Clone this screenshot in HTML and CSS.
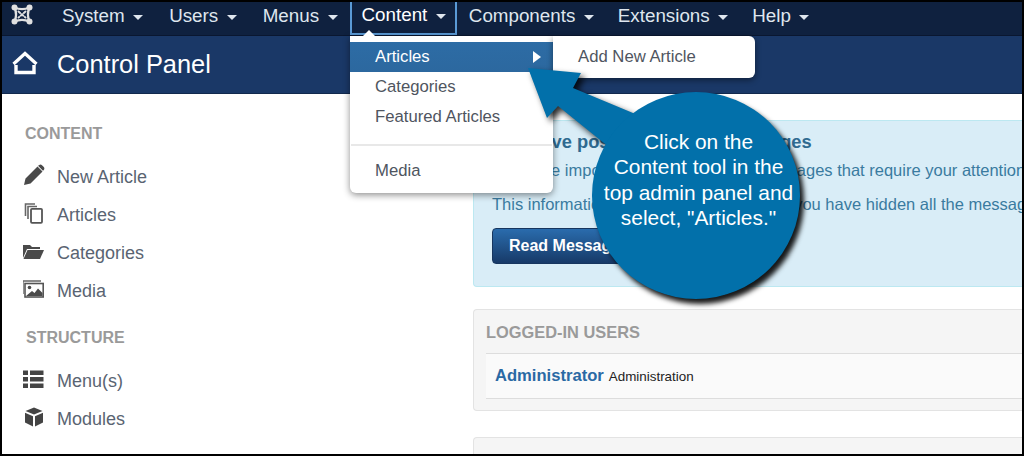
FILE: index.html
```html
<!DOCTYPE html>
<html lang="en">
<head>
<meta charset="utf-8">
<title>Control Panel</title>
<link rel="stylesheet" href="styles.css">
</head>
<body>
<div class="frame">
  <nav class="topnav">
    <div class="logo">
      <svg viewBox="0 0 22 21" width="22" height="21"><g fill="none" stroke="#e0e0e0" stroke-linecap="round"><path d="M3.5 3.5 C8 5.5 14 5.5 18.5 3.5 C16.5 8 16.5 13 18.5 17.5 C14 15.5 8 15.5 3.5 17.5 C5.5 13 5.5 8 3.5 3.5 Z" stroke-width="2.4"/><path d="M7.5 7.5 L14.5 13.5 M14.5 7.5 L7.5 13.5" stroke-width="2" stroke-dasharray="2.2 2"/></g><g fill="#e0e0e0"><circle cx="3.5" cy="3.5" r="3"/><circle cx="18.5" cy="3.5" r="3"/><circle cx="3.5" cy="17.5" r="3"/><circle cx="18.5" cy="17.5" r="3"/></g></svg>
    </div>
    <a class="navitem">System<i class="caret"></i></a>
    <a class="navitem">Users<i class="caret"></i></a>
    <a class="navitem">Menus<i class="caret"></i></a>
    <a class="navitem active">Content<i class="caret"></i></a>
    <a class="navitem">Components<i class="caret"></i></a>
    <a class="navitem">Extensions<i class="caret"></i></a>
    <a class="navitem">Help<i class="caret"></i></a>
  </nav>
  <header class="titlebar">
    <svg class="home" viewBox="0 0 26 24" width="26" height="24"><path d="M1.5 13 L13 2.5 L24.5 13" fill="none" stroke="#fff" stroke-width="3.2"/><path d="M4 14 V21.5 H22 V14" fill="none" stroke="#fff" stroke-width="3.4"/></svg>
    <h1>Control Panel</h1>
  </header>
  <div class="body">
    <aside class="sidebar">
      <h2 class="sidehead">CONTENT</h2>
      <ul class="sidelist">
        <li><svg viewBox="0 0 22 22" width="22" height="22"><path d="M1 21 L2.5 14.5 L14.5 2.5 L19.5 7.5 L7.5 19.5 Z M16 1.2 C17 .4 18 .4 19 1.2 L20.8 3 C21.6 4 21.6 5 20.8 6 L20 6.8 L15 1.8 Z" fill="#4a4a4a"/></svg>New Article</li>
        <li><svg viewBox="0 0 22 22" width="22" height="22"><path d="M2.5 14 V2 H12 M5 17 V4.5 H14" fill="none" stroke="#666" stroke-width="1.6"/><rect x="8" y="6.8" width="11" height="14" rx="1" fill="#fff" stroke="#555" stroke-width="1.8"/></svg>Articles</li>
        <li><svg viewBox="1 0 22 22" width="22" height="22"><path d="M1 5 H8 L10 7 H18 V9 H5 L1 18 Z" fill="#4a4a4a"/><path d="M5.5 10 H22 L18 19 H1.5 Z" fill="#4a4a4a"/></svg>Categories</li>
        <li><svg viewBox="1 0 22 22" width="22" height="22"><path d="M1 16 V3 H19" fill="none" stroke="#666" stroke-width="1.4"/><rect x="3" y="5.5" width="18.2" height="13.5" fill="#fff" stroke="#555" stroke-width="1.6"/><circle cx="7.5" cy="9.5" r="1.8" fill="#4a4a4a"/><path d="M4 18 L10 13 L12.5 15 L16 10.5 L20.5 15 V18 Z" fill="#4a4a4a"/></svg>Media</li>
      </ul>
      <h2 class="sidehead second">STRUCTURE</h2>
      <ul class="sidelist">
        <li><svg viewBox="1 0 22 22" width="22" height="22"><path d="M1 2.5 H6 V7 H1 Z M8 2.5 H21.5 V7 H8 Z M1 9 H6 V13.5 H1 Z M8 9 H21.5 V13.5 H8 Z M1 15.5 H6 V20 H1 Z M8 15.5 H21.5 V20 H8 Z" fill="#444"/></svg>Menu(s)</li>
        <li><svg viewBox="0 0 22 22" width="22" height="22"><path d="M11 1.5 L19.5 5 L11 8.5 L2.5 5 Z" fill="#444"/><path d="M2 6.8 L10 10.2 V20.5 L2 16.5 Z M20 6.8 L12 10.2 V20.5 L20 16.5 Z" fill="#444"/></svg>Modules</li>
      </ul>
    </aside>
    <main class="main">
      <section class="alert">
        <h3>You have post-installation messages</h3>
        <p>You have important post-installation messages that require your attention.</p>
        <p>This information area won't appear when you have hidden all the messages.</p>
        <button class="btn">Read Messages</button>
      </section>
      <section class="well">
        <h4>LOGGED-IN USERS</h4>
        <div class="userrow"><a class="username">Administrator</a> <small>Administration</small></div>
      </section>
      <section class="well last">
        <h4>POPULAR ARTICLES</h4>
      </section>
    </main>
  </div>

  <div class="menu">
    <i class="menutip"></i>
    <div class="menuitem current">Articles<i class="arrowright"></i></div>
    <div class="menuitem">Categories</div>
    <div class="menuitem">Featured Articles</div>
    <hr class="divider">
    <div class="menuitem">Media</div>
  </div>
  <div class="submenu">Add New Article</div>

  <svg class="pointer" viewBox="0 0 200 120" width="200" height="120"><path d="M8 8 L61 13 L53 28 L125 58 L95 92 L38 46 L27 58 Z" fill="#0270aa"/></svg>
  <div class="bubble">Click on the<br>Content tool in the<br>top admin panel and<br>select, "Articles."</div>
</div>
</body>
</html>
```
FILE: styles.css
```css
* { box-sizing: border-box; }
html, body { margin: 0; padding: 0; background: #000; }
body { width: 1024px; height: 456px; overflow: hidden; font-family: "Liberation Sans", Arial, sans-serif; }

.frame {
  position: relative;
  width: 1024px;
  height: 456px;
  border: 2px solid #000;
  overflow: hidden;
  background: #fff;
  display: flex;
  flex-direction: column;
}

.topnav {
  height: 34px;
  flex: none;
  display: flex;
  background: #0f213f;
  border-bottom: 1px solid #0a1730;
  color: #dfe6ee;
  font-size: 18.8px;
}
.logo { width: 47px; flex: none; padding: 0 0 0 9px; display: flex; align-items: center; height: 24px; }
.navitem { display: flex; align-items: center; height: 29px; padding: 0 13px; line-height: 1; }
.navitem.active {
  height: 33px;
  margin-left: -1px;
  color: #fff;
  border: 2px solid #5a9ad6;
  border-top: 0;
  padding: 0 9px 4px 10px;
}
.active ~ .navitem { padding: 0 12px; }
.caret {
  display: inline-block;
  margin-left: 8.5px;
  margin-top: 2px;
  border-top: 5px solid #dfe6ee;
  border-left: 5px solid transparent;
  border-right: 5px solid transparent;
}

.titlebar {
  height: 58px;
  flex: none;
  display: flex;
  align-items: center;
  gap: 19px;
  padding: 0 0 0 10px;
  background: #1a3867;
  border-bottom: 1px solid #12294d;
}
.home { flex: none; margin-top: -4px; }
.titlebar h1 { margin: 0; font-size: 25.4px; font-weight: 400; color: #fff; }

.body { flex: 1; display: flex; min-height: 0; overflow: hidden; }

.sidebar { width: 471px; flex: none; padding: 30px 0 0 21px; color: #5a6472; }
.sidehead { margin: 0 0 14px 2px; font-size: 16px; line-height: 20px; font-weight: 700; color: #9a9a9a; }
.sidehead.second { margin-top: 18px; margin-left: 3px; margin-bottom: 14px; }
.sidelist { list-style: none; margin: 0; padding: 0; }
.sidelist li { height: 38px; display: flex; align-items: center; gap: 12px; font-size: 18px; }
.sidelist svg { flex: none; margin-top: -4px; }

.main { flex: 1; min-width: 0; padding-top: 26px; }
.alert {
  height: 167px;
  margin-bottom: 22px;
  padding: 11px 18px 0;
  background: #d9edf7;
  border: 1px solid #bce8f1;
  border-right: 0;
  border-radius: 4px 0 0 4px;
  color: #3a7ba0;
  white-space: nowrap;
  overflow: hidden;
}
.alert h3 { margin: 0 0 8px; font-size: 18.3px; line-height: 20px; font-weight: 700; color: #2f6a90; }
.alert p { margin: 0 0 13px; font-size: 16.5px; line-height: 21px; }
.btn {
  display: block;
  margin-top: 13px;
  width: 150px;
  height: 36px;
  padding: 0 0 0 16px;
  text-align: left;
  font: 700 16px "Liberation Sans", Arial, sans-serif;
  color: #fff;
  background: linear-gradient(#2a6cad, #173a68);
  border: 1px solid #17365f;
  border-radius: 4px;
}

.well {
  height: 102px;
  margin-bottom: 26px;
  padding: 12px 0 0 12px;
  background: #f5f5f5;
  border: 1px solid #e3e3e3;
  border-right: 0;
  border-radius: 4px 0 0 4px;
}
.well.last { height: 60px; margin: 0; padding-top: 15px; }
.well h4 { margin: 0 0 11px; font-size: 16.4px; line-height: 20px; font-weight: 700; color: #9a9a9a; }
.userrow {
  height: 46px;
  display: flex;
  align-items: center;
  gap: 5px;
  padding-left: 9px;
  background: #fafafa;
  border-top: 1px solid #ddd;
  border-bottom: 1px solid #ddd;
}
.username { font-size: 16.6px; font-weight: 700; color: #2a69a4; }
.userrow small { font-size: 13.4px; color: #222; }

/* Dropdown menus lie over the page */
.menu {
  position: absolute;
  left: 348px;
  top: 34px;
  width: 203px;
  height: 157px;
  padding-top: 6px;
  background: #fff;
  border-radius: 0 0 6px 6px;
  box-shadow: 0 2px 7px rgba(0, 0, 0, .45);
  color: #4f5560;
  font-size: 16.7px;
}
.menutip {
  position: absolute;
  left: 13px;
  top: -6px;
  border-bottom: 6px solid #fff;
  border-left: 6px solid transparent;
  border-right: 6px solid transparent;
}
.menuitem { height: 30px; padding-left: 25px; display: flex; align-items: center; }
.menuitem.current { color: #fff; background: linear-gradient(#2d6ca5, #2c689f); justify-content: space-between; padding-right: 12px; }
.arrowright { border-left: 8px solid #fff; border-top: 6px solid transparent; border-bottom: 6px solid transparent; }
.divider { margin: 12px 1px 10px; height: 2px; border: 0; background: #e8e8e8; }

.submenu {
  position: absolute;
  left: 551px;
  top: 34px;
  width: 202px;
  height: 42px;
  padding: 0 0 0 25px;
  display: flex;
  align-items: center;
  background: #fff;
  border-radius: 0 6px 6px 6px;
  box-shadow: 0 2px 6px rgba(0, 0, 0, .45);
  color: #4f5560;
  font-size: 16.7px;
}

/* Annotation laid over the screenshot */
.pointer {
  position: absolute;
  left: 518px;
  top: 58px;
  filter: drop-shadow(4px 4px 3px rgba(0, 0, 0, .8));
}
.bubble {
  position: absolute;
  left: 590px;
  top: 90px;
  width: 208px;
  height: 207px;
  padding: 37px 0 0 5px;
  border-radius: 50%;
  background: #0270aa;
  box-shadow: 4px 5px 5px rgba(0, 0, 0, .9);
  color: #fff;
  font-size: 20.9px;
  line-height: 25.4px;
  text-align: center;
  white-space: nowrap;
}
```
